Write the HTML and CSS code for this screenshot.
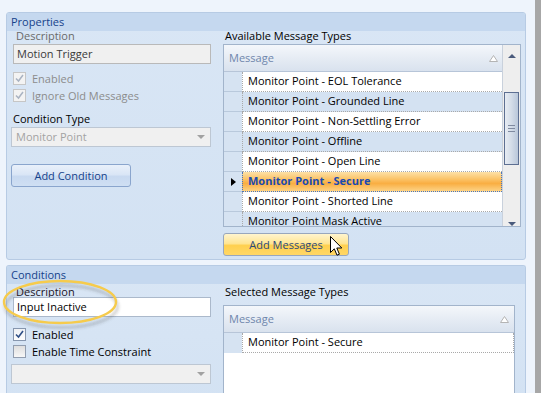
FILE: index.html
```html
<!DOCTYPE html>
<html>
<head>
<meta charset="utf-8">
<link rel="stylesheet" href="styles.css">
</head>
<body>
<div class="screen">
  <div class="main">
    <section class="panel props">
      <div class="panel-head">Properties</div>
      <div class="panel-body">
        <div class="col-left">
          <div class="lbl indent muted">Description</div>
          <div class="textbox disabled">Motion Trigger</div>
          <div class="checks first">
            <div class="chk disabled"><span class="box dis-checked"><svg width="9" height="9" viewBox="0 0 9 9"><path d="M1 4.5 L3.5 7 L8 1" fill="none" stroke="#a9b3c2" stroke-width="1.5"/></svg></span>Enabled</div>
            <div class="chk disabled"><span class="box dis-checked"><svg width="9" height="9" viewBox="0 0 9 9"><path d="M1 4.5 L3.5 7 L8 1" fill="none" stroke="#a9b3c2" stroke-width="1.5"/></svg></span>Ignore Old Messages</div>
          </div>
          <div class="lbl ctype">Condition Type</div>
          <div class="combo disabled"><span>Monitor Point</span><span class="darrow"></span></div>
          <div class="btn blue addcond">Add Condition</div>
        </div>
        <div class="col-right">
          <div class="lbl">Available Message Types</div>
          <div class="grid g1">
            <div class="grid-main">
              <div class="grid-head"><span>Message</span><svg class="sort" width="9" height="7" viewBox="0 0 9 7"><path d="M4.5 0.5 L8.5 6.5 L0.5 6.5 Z" fill="#fff" stroke="#b4b4b4"/></svg></div>
              <div class="grid-rows">
                <div class="row"><span class="rh"></span><span class="cell">Monitor Point - EOL Tolerance</span></div>
                <div class="row alt"><span class="rh"></span><span class="cell">Monitor Point - Grounded Line</span></div>
                <div class="row"><span class="rh"></span><span class="cell">Monitor Point - Non-Settling Error</span></div>
                <div class="row alt"><span class="rh"></span><span class="cell">Monitor Point - Offline</span></div>
                <div class="row"><span class="rh"></span><span class="cell">Monitor Point - Open Line</span></div>
                <div class="row sel"><span class="rh"><span class="cur"></span></span><span class="cell">Monitor Point - Secure</span></div>
                <div class="row"><span class="rh"></span><span class="cell">Monitor Point - Shorted Line</span></div>
                <div class="row alt"><span class="rh"></span><span class="cell">Monitor Point Mask Active</span></div>
              </div>
            </div>
            <div class="vscroll">
              <span class="up"></span>
              <div class="track">
                <div class="thumb"><span class="grip"></span></div>
              </div>
              <span class="down"></span>
            </div>
          </div>
          <div class="btn orange addmsg">Add Messages</div>
        </div>
      </div>
    </section>

    <section class="panel conds">
      <div class="panel-head">Conditions</div>
      <div class="panel-body">
        <div class="col-left">
          <div class="lbl indent dark">Description</div>
          <div class="textbox">Input Inactive</div>
          <div class="checks second">
            <div class="chk"><span class="box on"><svg width="9" height="9" viewBox="0 0 9 9"><path d="M1 4.5 L3.5 7 L8 1" fill="none" stroke="#2f4f86" stroke-width="1.6"/></svg></span>Enabled</div>
            <div class="chk"><span class="box off"></span>Enable Time Constraint</div>
          </div>
          <div class="combo disabled blank"><span></span><span class="darrow"></span></div>
        </div>
        <div class="col-right">
          <div class="lbl">Selected Message Types</div>
          <div class="grid g2">
            <div class="grid-main">
              <div class="grid-head"><span>Message</span><svg class="sort" width="9" height="7" viewBox="0 0 9 7"><path d="M4.5 0.5 L8.5 6.5 L0.5 6.5 Z" fill="#fff" stroke="#b4b4b4"/></svg></div>
              <div class="grid-rows">
                <div class="row"><span class="rh blue"></span><span class="cell">Monitor Point - Secure</span></div>
              </div>
            </div>
          </div>
        </div>
      </div>
    </section>
  </div>
  <div class="edge"></div>

  <svg class="ring" width="130" height="56" viewBox="0 0 130 56">
    <defs>
      <filter id="sh" x="-20%" y="-30%" width="140%" height="160%">
        <feGaussianBlur stdDeviation="1.5"/>
      </filter>
    </defs>
    <ellipse cx="59" cy="25" rx="56" ry="21" fill="none" stroke="rgba(60,60,60,0.28)" stroke-width="2.5" filter="url(#sh)" transform="translate(1.5,2.5)"/>
    <ellipse cx="59" cy="23" rx="56" ry="21" fill="none" stroke="#f6cb4c" stroke-width="2.4"/>
  </svg>

  <svg class="pointer" width="14" height="22" viewBox="0 0 14 22">
    <path d="M0.5 0.5 L0.5 16.5 L4.3 12.8 L7 19.2 L9.4 18.2 L6.8 12 L11.8 12 Z" fill="#fff" stroke="#000" stroke-width="1" stroke-linejoin="miter"/>
  </svg>
</div>
</body>
</html>
```

FILE: styles.css
```css
* { box-sizing: border-box; }
html, body { margin: 0; padding: 0; }
body {
  width: 541px;
  height: 393px;
  overflow: hidden;
  background: #eef4fc;
  font-family: "Open Sans", "Noto Sans", sans-serif;
  font-size: 11px;
  color: #000;
}
.screen {
  position: relative;
  display: flex;
  width: 541px;
  height: 393px;
  overflow: hidden;
}
.main {
  width: 535px;
  padding: 12px 9px 0 6px;
  display: flex;
  flex-direction: column;
  gap: 5px;
}
.edge {
  width: 6px;
  background: #a7a7a7;
}

/* panels */
.panel {
  border: 1px solid #b7cbe4;
  border-radius: 3px;
  background: linear-gradient(#d9e6f5, #d3e2f3);
  overflow: hidden;
  flex: none;
}
.props { height: 248px; }
.conds { height: 140px; border-bottom: none; border-radius: 3px 3px 0 0; }
.panel-head {
  height: 18px;
  line-height: 18px;
  padding-left: 4px;
  background: #c5d8ef;
  color: #15428b;
}
.panel-body {
  display: flex;
  gap: 12px;
  padding: 0 4px;
}
.col-left { width: 200px; flex: none; display: flex; flex-direction: column; align-items: flex-start; }
.col-right { width: 298px; flex: none; display: flex; flex-direction: column; align-items: flex-start; }

.lbl {
  height: 13px;
  line-height: 9px;
  white-space: nowrap;
  padding-left: 2px;
}
.conds .lbl { line-height: 15px; }
.lbl.indent { padding-left: 5px; }
.lbl.muted { color: #6a6a6a; }
.lbl.dark { color: #1c1426; }
.lbl.ctype { margin-top: 10px; padding-left: 2px; }
.conds .col-right .lbl { height: 21px; }

/* text box */
.textbox {
  margin-left: 2px;
  width: 198px;
  height: 20px;
  border: 1px solid #abb9cb;
  background: #fff;
  padding-left: 3px;
  line-height: 17px;
  color: #000;
}
.textbox.disabled {
  background: #f0f0f0;
  border-color: #b9b9b9;
  color: #3a3a3a;
}

/* checkboxes */
.checks { display: flex; flex-direction: column; margin-left: 2px; }
.checks.first { margin-top: 6px; }
.checks.second { margin-top: 9px; }
.chk {
  height: 17px;
  line-height: 17px;
  display: flex;
  align-items: center;
  gap: 6px;
  white-space: nowrap;
}
.chk.disabled { color: #8c8c8c; }
.box {
  width: 13px;
  height: 13px;
  border: 1px solid #8e9db3;
  display: flex;
  align-items: center;
  justify-content: center;
  flex: none;
}
.box.dis-checked { border-color: #c6c6c6; background: #f3f3f3; }
.box.on { background: linear-gradient(#eef1f5, #fdfdfd); border-color: #8696ae; }
.box.off { background: linear-gradient(#dedede, #f7f7f7); border-color: #929eb0; }

/* combo */
.combo {
  width: 200px;
  height: 20px;
  border: 1px solid #bdc7d3;
  background: #f0f0f0;
  color: #a3a3a3;
  padding-left: 4px;
  padding-right: 5px;
  line-height: 18px;
  display: flex;
  justify-content: space-between;
  align-items: center;
}
.conds .combo { margin-top: 4px; }
.darrow {
  width: 0; height: 0;
  border-left: 4px solid transparent;
  border-right: 4px solid transparent;
  border-top: 4px solid #a2a2a2;
}

/* buttons */
.btn {
  height: 23px;
  border-radius: 3px;
  text-align: center;
  line-height: 21px;
  color: #15428b;
  white-space: nowrap;
}
.btn.blue {
  border: 1px solid #8aa5cd;
  background: linear-gradient(#e9f0fa 0%, #dae6f6 45%, #c8d9f0 55%, #cfdff3 100%);
}
.btn.orange {
  border: 1px solid #98a7bd;
  color: #2b4a7c;
  background: linear-gradient(#fff5cf 0%, #ffe593 45%, #ffd04f 55%, #ffd766 100%);
}
.addcond { width: 120px; margin-top: 17px; }
.addmsg { width: 126px; margin-top: 6px; }

/* grid */
.grid {
  border: 1px solid #a2b4cb;
  background: #fff;
  display: flex;
  overflow: hidden;
}
.g1 { width: 298px; height: 183px; }
.g2 { width: 292px; height: 120px; border-bottom: none; }
.grid-main { flex: 1; display: flex; flex-direction: column; min-width: 0; }
.grid-head {
  height: 27px;
  flex: none;
  background: linear-gradient(#f4f7fb, #e6ecf4 50%, #d9e2ee);
  border-bottom: 1px solid #b7c5d8;
  color: #6f86ac;
  padding-left: 5px;
  padding-right: 5px;
  line-height: 26px;
  display: flex;
  justify-content: space-between;
  align-items: center;
}
.g1 .grid-head { padding-right: 4px; }
.grid-rows { flex: 1; overflow: hidden; }
.row {
  display: flex;
  height: 20px;
}
.rh {
  width: 18px;
  flex: none;
  background: #d6e3f2;
  border-bottom: 1px solid #b9c9dc;
  display: flex;
  align-items: center;
  padding-left: 7px;
}
.g2 .rh { border-bottom: none; }
.cell {
  flex: 1;
  border-left: 1px dotted #a9a9a9;
  border-bottom: 1px dotted #a9a9a9;
  padding-left: 5px;
  line-height: 17px;
  white-space: nowrap;
  overflow: hidden;
  background: #fff;
}
.g2 .cell { border-right: 1px dotted #a9a9a9; }
.row.alt .cell { background: #d4e2f2; }
.row.sel .cell {
  background: linear-gradient(#fde1a8 0%, #fbc56c 35%, #f9ae42 60%, #fdd284 100%);
  color: #1a4ab0;
  font-weight: bold;
  border: 1px dotted #4a74bd;
  border-top: none;
}
.cur {
  width: 0; height: 0;
  border-top: 4px solid transparent;
  border-bottom: 4px solid transparent;
  border-left: 5px solid #000;
}

/* scrollbar */
.vscroll {
  width: 18px;
  flex: none;
  background: #eeeeee;
  border-left: 1px solid #c9d1dc;
  display: flex;
  flex-direction: column;
  align-items: center;
}
.up, .down {
  width: 0; height: 0;
  border-left: 4px solid transparent;
  border-right: 4px solid transparent;
  flex: none;
}
.up { border-bottom: 4px solid #4a5b7c; margin-top: 9px; }
.down { border-top: 4px solid #4a5b7c; margin-top: 7px; }
.track { flex: 1; width: 100%; padding-top: 34px; padding-left: 1px; }
.thumb {
  width: 15px;
  height: 73px;
  border: 1px solid #5d6f92;
  background: linear-gradient(90deg, #e7ecf3, #d3dce8 50%, #b9c7da);
  display: flex;
  align-items: center;
  justify-content: center;
}
.grip {
  width: 7px;
  height: 7px;
  background: repeating-linear-gradient(#7f8aa0 0 1px, transparent 1px 3px);
}

/* overlays */
.ring {
  position: absolute;
  left: 1px;
  top: 279px;
}
.pointer {
  position: absolute;
  left: 330px;
  top: 236px;
}
```
